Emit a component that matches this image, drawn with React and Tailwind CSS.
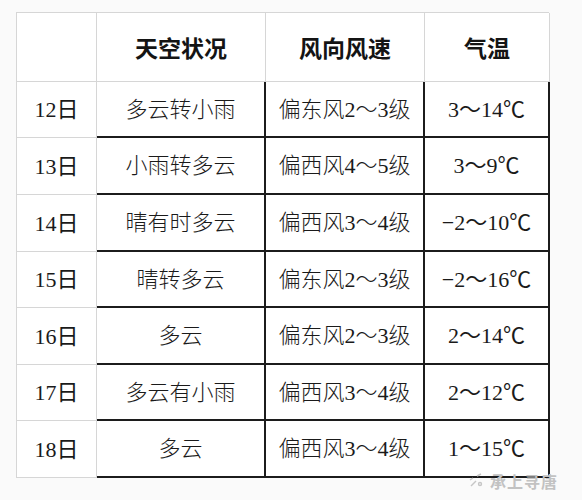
import React from "react"

const rows = [
    { day: "12日", sky: "多云转小雨", wind: "偏东风2～3级", temp: "3～14℃", h: "h-[56px]" },
    { day: "13日", sky: "小雨转多云", wind: "偏西风4～5级", temp: "3～9℃", h: "h-[57px]" },
    { day: "14日", sky: "晴有时多云", wind: "偏西风3～4级", temp: "−2～10℃", h: "h-[57px]" },
    { day: "15日", sky: "晴转多云", wind: "偏东风2～3级", temp: "−2～16℃", h: "h-[56px]" },
    { day: "16日", sky: "多云", wind: "偏东风2～3级", temp: "2～14℃", h: "h-[57px]" },
    { day: "17日", sky: "多云有小雨", wind: "偏西风3～4级", temp: "2～12℃", h: "h-[56px]" },
    { day: "18日", sky: "多云", wind: "偏西风3～4级", temp: "1～15℃", h: "h-[57px]" },
]

const font = { fontFamily: '"Liberation Serif", "Noto Sans CJK SC", serif' }
const head = { fontFamily: '"Noto Sans CJK SC", sans-serif' }

function App() {
    return (
        <div className="relative w-[582px] h-[500px] bg-[#fafafa] overflow-hidden" style={font}>
            <div className="ml-[16px] mt-[12px] w-[533px] border-l border-t border-[#d6d6d6] grid grid-cols-[80px_169px_159px_125px] bg-white">
                <div className="h-[69px] border-r border-b border-[#d6d6d6]" />
                <div className="h-[69px] border-r border-b border-[#d6d6d6] flex items-center justify-center text-[23px] font-bold text-[#141414]" style={head}>天空状况</div>
                <div className="h-[69px] border-r border-b border-[#d6d6d6] flex items-center justify-center text-[23px] font-bold text-[#141414]" style={head}>风向风速</div>
                <div className="h-[69px] border-r border-b border-[#d6d6d6] flex items-center justify-center text-[23px] font-bold text-[#141414]" style={head}>气温</div>
                {rows.map((r, i) => (
                    <React.Fragment key={i}>
                        <div className={r.h + " border-r border-b border-[#d6d6d6] flex items-center justify-center text-[22px] text-[#1a1a1a]"}>{r.day}</div>
                        <div className={r.h + " border-r-2 border-b-2 border-[#1c1c1c] flex items-center justify-center text-[22px] text-[#1a1a1a] font-light"}>{r.sky}</div>
                        <div className={r.h + " border-r-2 border-b-2 border-[#1c1c1c] flex items-center justify-center text-[22px] text-[#1a1a1a] font-light"}>{r.wind}</div>
                        <div className={r.h + " border-r-2 border-b-2 border-[#1c1c1c] flex items-center justify-center text-[22px] text-[#1a1a1a]"}>{r.temp}</div>
                    </React.Fragment>
                ))}
            </div>
            <div className="absolute left-[468px] top-[469px] flex items-center gap-[4px] text-[#c2c2c2]">
                <svg width="18" height="18" viewBox="0 0 18 18" fill="none" stroke="#c6c6c6" strokeWidth="1.4">
                    <path d="M3 14 L8 9" />
                    <path d="M9 4 L13 2" />
                    <path d="M2 8 L5 6" />
                    <circle cx="12" cy="12" r="1.5" />
                </svg>
                <span className="text-[16px] font-bold tracking-[1px]" style={head}>承上寻唐</span>
            </div>
        </div>
    )
}

export default App
